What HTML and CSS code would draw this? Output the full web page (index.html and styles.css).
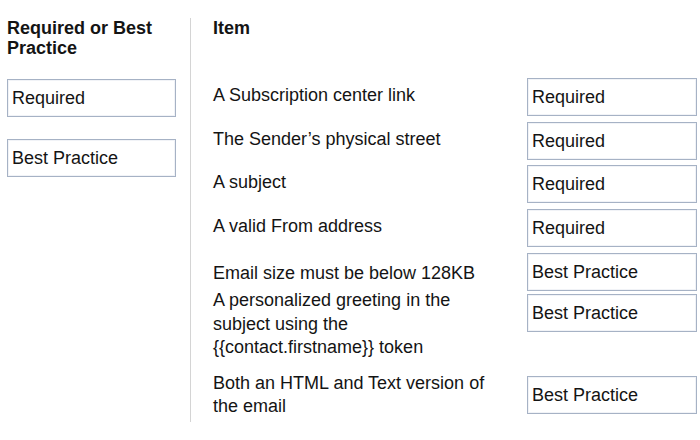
FILE: index.html
```html
<!DOCTYPE html>
<html>
<head>
<meta charset="utf-8">
<link rel="stylesheet" href="styles.css">
</head>
<body>
<div class="page">
  <div class="answers">
    <div class="heading">Required or Best Practice</div>
    <div class="pool">
      <div class="box">Required</div>
      <div class="box">Best Practice</div>
    </div>
  </div>
  <div class="items">
    <div class="heading">Item</div>
    <div class="rows">
      <div class="row"><div class="text">A Subscription center link</div><div class="box">Required</div></div>
      <div class="row"><div class="text">The Sender’s physical street</div><div class="box">Required</div></div>
      <div class="row row-tight"><div class="text">A subject</div><div class="box">Required</div></div>
      <div class="row"><div class="text">A valid From address</div><div class="box">Required</div></div>
      <div class="row row-low"><div class="text">Email size must be below 128KB</div><div class="box">Best Practice</div></div>
      <div class="row row-top"><div class="text">A personalized greeting in the subject using the {{contact.firstname}} token</div><div class="box">Best Practice</div></div>
      <div class="row row-two"><div class="text">Both an HTML and Text version of the email</div><div class="box">Best Practice</div></div>
    </div>
  </div>
</div>
</body>
</html>
```
FILE: styles.css
```css
html, body {
  margin: 0;
  padding: 0;
  background: #ffffff;
}
body {
  font-family: "Liberation Sans", Arial, sans-serif;
  font-size: 18px;
  color: #141414;
}
.page {
  display: flex;
  margin-top: 18px;
  height: 404px;
}
.answers {
  width: 183px;
  padding-left: 7px;
  border-right: 1px solid #d4d4d4;
}
.heading {
  font-weight: bold;
  line-height: 20px;
}
.answers .heading {
  width: 170px;
}
.pool {
  display: flex;
  flex-direction: column;
  gap: 22px;
  margin-top: 21px;
}
.box {
  box-sizing: border-box;
  width: 169px;
  height: 38px;
  border: 1px solid #a6b2c5;
  box-shadow: inset 0 0 0 1px #f1f3f7;
  padding-left: 4px;
  display: flex;
  align-items: center;
  line-height: 20px;
  flex-shrink: 0;
}
.items {
  padding-left: 22px;
}
.rows {
  display: flex;
  flex-direction: column;
  gap: 6px;
  margin-top: 40px;
}
.row {
  display: flex;
  align-items: center;
}
.row .text {
  width: 314px;
  line-height: 23px;
  padding-bottom: 4px;
}
.row .box {
  width: 170px;
}
.row-tight {
  margin-top: -1px;
}
.row-low .text {
  padding-bottom: 0;
  padding-top: 2px;
}
.row-top {
  align-items: flex-start;
  margin-top: -3px;
}
.row-top .text {
  width: 250px;
  padding-bottom: 0;
  margin-top: -5px;
  margin-right: 64px;
  line-height: 23.5px;
}
.row-two {
  margin-top: 6px;
}
.row-two .text {
  width: 290px;
  margin-right: 24px;
  padding-bottom: 0;
}
```
